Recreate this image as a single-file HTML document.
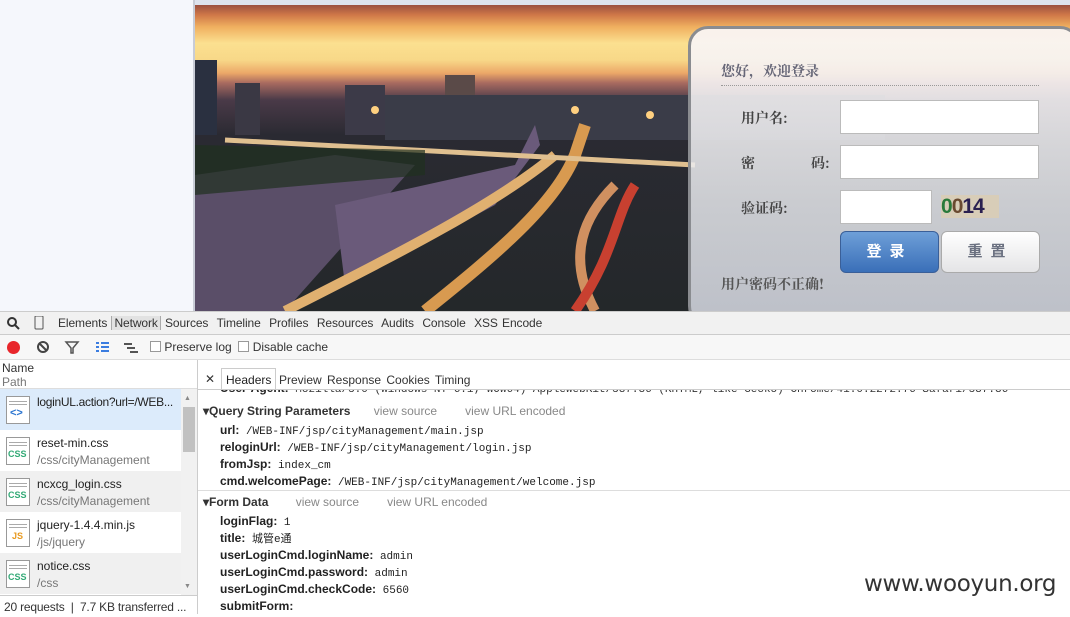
<!DOCTYPE html>
<html><head><meta charset="utf-8"><style>
*{margin:0;padding:0;box-sizing:border-box}
body{width:1070px;height:614px;overflow:hidden;position:relative;background:#fff;font-family:"Liberation Sans","Noto Sans CJK SC",sans-serif;font-size:12px;color:#222}
.a{position:absolute}
.mono{font-family:"Liberation Mono","Noto Sans CJK SC",monospace;font-size:11px}
.mono div{height:17px;line-height:17px;white-space:nowrap}
.row{position:absolute;left:0;width:181px;height:41px}
.ic{position:absolute;left:6px;top:7px;width:24px;height:28px;border:1px solid #999;background:#fff}
.ic b{position:absolute;left:2px;right:2px;height:1px;background:#aaa}
.ic i{position:absolute;left:1px;bottom:5px;font-style:normal;font-size:9px;font-weight:bold;color:#3a7;background:#fff;line-height:10px}
.t1{position:absolute;left:37px;top:6px;font-size:12px;color:#222}
.t2{position:absolute;left:37px;top:23px;font-size:12px;color:#777}
.k{font-weight:bold;color:#222;font-family:"Liberation Sans",sans-serif;font-size:12px}
.lab{position:absolute;font-weight:bold;font-size:14px;color:#444;font-family:"Noto Serif CJK SC",serif}
.inp{position:absolute;background:#fff;border:1px solid #bbb}
</style></head><body>
<div class="a" style="left:0;top:0;width:193px;height:311px;background:#f5f7fc"></div>
<div class="a" style="left:193px;top:0;width:2px;height:311px;background:#c8ccd6"></div>
<div class="a" style="left:195px;top:0;width:875px;height:5px;background:#dde3ee"></div>
<!-- photo -->
<div class="a" style="left:195px;top:5px;width:875px;height:306px;overflow:hidden;background:linear-gradient(180deg,#9a5040 0px,#d07848 10px,#f0b060 22px,#fbe090 38px,#f8d888 55px,#eca868 68px,#a86a60 78px,#4a3a48 95px,#2a2a32 130px,#24282a 306px)">
<svg width="875" height="306" style="position:absolute;left:0;top:0">
<rect x="0" y="55" width="22" height="75" fill="#2a3040"/>
<rect x="40" y="78" width="25" height="52" fill="#3a3844"/>
<rect x="150" y="80" width="40" height="50" fill="#3c3a48"/>
<rect x="250" y="70" width="30" height="60" fill="#5a4a48"/>
<rect x="190" y="90" width="500" height="45" fill="#3a3c48"/>
<circle cx="180" cy="105" r="4" fill="#ffd080"/><circle cx="380" cy="105" r="4" fill="#ffd080"/><circle cx="455" cy="110" r="4" fill="#ffd080"/>
<path d="M0 170 L140 150 L220 160 L90 306 L0 306Z" fill="#5a4e68"/>
<path d="M140 200 L320 160 L340 120 L345 140 L300 200 L150 280Z" fill="#6a5a7a"/>
<path d="M90 306 C200 250 300 200 360 150" stroke="#e0b070" stroke-width="10" fill="none"/>
<path d="M230 306 C300 250 360 200 380 150 L390 120" stroke="#d89a50" stroke-width="12" fill="none"/>
<path d="M30 135 L500 160" stroke="#e0c090" stroke-width="5" fill="none"/>
<path d="M400 306 C370 250 390 210 420 180" stroke="#d09060" stroke-width="10" fill="none"/>
<path d="M380 306 C420 250 420 210 440 180" stroke="#c84030" stroke-width="10" fill="none"/>
<path d="M0 140 L230 145 L230 170 L0 190Z" fill="#203020" opacity=".7"/>
</svg>
</div>
<!-- login panel -->
<div class="a" style="left:688px;top:26px;width:392px;height:300px;border:3px solid #8a8c90;border-radius:20px;background:linear-gradient(180deg,rgba(250,246,246,.93),rgba(230,232,236,.85) 60%,rgba(215,218,228,.85))"></div>
<div class="a" style="left:721px;top:61px;font-size:14px;font-weight:bold;color:#667;font-family:'Noto Serif CJK SC',serif">您好，欢迎登录</div>
<div class="a" style="left:721px;top:85px;width:318px;border-top:1px dotted #999"></div>
<div class="lab" style="left:741px;top:108px">用户名:</div>
<div class="lab" style="left:741px;top:153px">密</div>
<div class="lab" style="left:811px;top:153px">码:</div>
<div class="lab" style="left:741px;top:198px">验证码:</div>
<div class="inp" style="left:840px;top:100px;width:199px;height:34px"></div>
<div class="inp" style="left:840px;top:145px;width:199px;height:34px"></div>
<div class="inp" style="left:840px;top:190px;width:92px;height:34px"></div>
<div class="a" style="left:941px;top:195px;width:58px;height:23px;background:#d8cdb8;font:bold 21px 'Liberation Sans';letter-spacing:-1px;color:#2a2050"><span style="color:#2a7a3a">0</span><span style="color:#6a4a30">0</span>14</div>
<div class="a" style="left:840px;top:231px;width:99px;height:42px;border-radius:6px;background:linear-gradient(180deg,#6e9fd8,#3a6fb8);border:1px solid #3a5f98;color:#fff;font-size:15px;font-weight:bold;text-align:center;line-height:40px;letter-spacing:8px">登录</div>
<div class="a" style="left:941px;top:231px;width:99px;height:42px;border-radius:6px;background:linear-gradient(180deg,#fff,#e4e4e6);border:1px solid #aaa;color:#6a7080;font-size:15px;font-weight:bold;text-align:center;line-height:40px;letter-spacing:8px">重置</div>
<div class="a" style="left:721px;top:274px;font-size:14px;font-weight:bold;color:#555;font-family:'Noto Serif CJK SC',serif">用户密码不正确!</div>
<!-- devtools -->
<div class="a" style="left:0;top:311px;width:1070px;height:24px;background:#f1f1f1;border-top:1px solid #ccc;border-bottom:1px solid #ccc"></div>
<svg class="a" style="left:6px;top:316px" width="40" height="14"><circle cx="6" cy="6" r="4" stroke="#333" stroke-width="2" fill="none"/><path d="M9 9 L13 13" stroke="#333" stroke-width="2"/><rect x="29" y="0" width="8" height="13" rx="1" stroke="#555" fill="none"/></svg>
<div class="a" style="left:58px;top:316px;font-size:12px;color:#333;word-spacing:1px;letter-spacing:-0.1px">Elements <span style="border-left:1px solid #aaa;border-right:1px solid #aaa;padding:0 2px;background:#e2e2e2">Network</span> Sources&nbsp; Timeline&nbsp; Profiles&nbsp; Resources&nbsp; Audits&nbsp; Console&nbsp; XSS Encode</div>
<div class="a" style="left:0;top:335px;width:1070px;height:25px;background:#f7f7f7;border-bottom:1px solid #ddd"></div>
<div class="a" style="left:7px;top:341px;width:13px;height:13px;border-radius:50%;background:#e8262b"></div>
<svg class="a" style="left:36px;top:340px" width="120" height="16"><circle cx="7" cy="7" r="5" stroke="#444" stroke-width="2" fill="none"/><path d="M3 3 L11 11" stroke="#444" stroke-width="2"/><path d="M30 2 L42 2 L37 8 L37 13 L35 13 L35 8Z" stroke="#555" stroke-width="1.5" fill="none"/><g fill="#3b7de0"><rect x="60" y="2" width="3" height="2"/><rect x="65" y="2" width="8" height="2"/><rect x="60" y="6" width="3" height="2"/><rect x="65" y="6" width="8" height="2"/><rect x="60" y="10" width="3" height="2"/><rect x="65" y="10" width="8" height="2"/></g><g fill="#555"><rect x="88" y="3" width="8" height="2"/><rect x="91" y="7" width="8" height="2"/><rect x="94" y="11" width="8" height="2"/></g></svg>
<div class="a" style="left:150px;top:340px;font-size:12px;color:#333"><span style="display:inline-block;width:11px;height:11px;border:1px solid #999;background:#fff;vertical-align:-1px"></span> Preserve log &nbsp;<span style="display:inline-block;width:11px;height:11px;border:1px solid #999;background:#fff;vertical-align:-1px"></span> Disable cache</div>
<div class="a" style="left:2px;top:361px;font-size:12px;color:#333;line-height:14px">Name<br><span style="color:#777">Path</span></div>
<div class="a" style="left:197px;top:360px;width:1px;height:254px;background:#ccc"></div>
<div class="a" style="left:0;top:388px;width:197px;height:1px;background:#ddd"></div>
<div class="a" style="left:205px;top:372px;font-size:12px;color:#333">✕</div>
<div class="a" style="left:221px;top:368px;height:22px;border:1px solid #ccc;border-bottom:none;background:#fff;padding:4px 4px 0;font-size:12px">Headers</div>
<div class="a" style="left:279px;top:373px;font-size:12px;color:#333;word-spacing:2px">Preview Response Cookies Timing</div>
<!-- list -->
<div class="row" style="top:389px;background:#dcebfb"><div class="ic"><b style="top:4px"></b><b style="top:7px"></b><span style="position:absolute;left:3px;top:10px;color:#2a74d0;font-weight:bold;font-size:11px">&lt;&gt;</span></div><div class="t1" style="letter-spacing:-0.3px">loginUL.action?url=/WEB...</div></div>
<div class="row" style="top:430px;background:#fff"><div class="ic"><b style="top:4px"></b><b style="top:7px"></b><i>CSS</i></div><div class="t1">reset-min.css</div><div class="t2">/css/cityManagement</div></div>
<div class="row" style="top:471px;background:#f0f0f0"><div class="ic"><b style="top:4px"></b><b style="top:7px"></b><i>CSS</i></div><div class="t1">ncxcg_login.css</div><div class="t2">/css/cityManagement</div></div>
<div class="row" style="top:512px;background:#fff"><div class="ic"><b style="top:4px"></b><b style="top:7px"></b><i style="color:#e89a20;left:5px">JS</i></div><div class="t1">jquery-1.4.4.min.js</div><div class="t2">/js/jquery</div></div>
<div class="row" style="top:553px;background:#f0f0f0"><div class="ic"><b style="top:4px"></b><b style="top:7px"></b><i>CSS</i></div><div class="t1">notice.css</div><div class="t2">/css</div></div>
<div class="a" style="left:181px;top:389px;width:16px;height:206px;background:#f1f1f1"></div>
<div class="a" style="left:183px;top:407px;width:12px;height:45px;background:#c1c1c1"></div>
<div class="a" style="left:184px;top:395px;font-size:7px;color:#888">▲</div>
<div class="a" style="left:184px;top:583px;font-size:7px;color:#888">▼</div>
<div class="a" style="left:0;top:595px;width:197px;height:19px;border-top:1px solid #ccc;background:#fff;font-size:12px;color:#333;padding:4px 0 0 4px;white-space:nowrap;letter-spacing:-0.2px">20 requests &nbsp;|&nbsp; 7.7 KB transferred ...</div>
<!-- headers -->
<div class="a" style="left:198px;top:390px;width:872px;height:8px;overflow:hidden">
<div class="mono" style="position:absolute;left:22px;top:-9px;white-space:nowrap;color:#333"><span class="k">User-Agent:</span> Mozilla/5.0 (Windows NT 6.1; WOW64) AppleWebKit/537.36 (KHTML, like Gecko) Chrome/41.0.2272.76 Safari/537.36</div></div>
<div class="a" style="left:198px;top:389px;width:872px;height:1px;background:#ccc"></div>
<div class="a" style="left:203px;top:404px;font-size:12px;font-weight:bold;color:#333">▾Query String Parameters <span style="font-weight:normal;color:#888;margin-left:20px">view source</span><span style="font-weight:normal;color:#888;margin-left:28px">view URL encoded</span></div>
<div class="a mono" style="left:220px;top:422px;color:#222">
<div><span class="k">url:</span> /WEB-INF/jsp/cityManagement/main.jsp</div>
<div><span class="k">reloginUrl:</span> /WEB-INF/jsp/cityManagement/login.jsp</div>
<div><span class="k">fromJsp:</span> index_cm</div>
<div><span class="k">cmd.welcomePage:</span> /WEB-INF/jsp/cityManagement/welcome.jsp</div></div>
<div class="a" style="left:198px;top:490px;width:872px;height:1px;background:#ddd"></div>
<div class="a" style="left:203px;top:495px;font-size:12px;font-weight:bold;color:#333">▾Form Data <span style="font-weight:normal;color:#888;margin-left:24px">view source</span><span style="font-weight:normal;color:#888;margin-left:28px">view URL encoded</span></div>
<div class="a mono" style="left:220px;top:513px;color:#222">
<div><span class="k">loginFlag:</span> 1</div>
<div><span class="k">title:</span> 城管e通</div>
<div><span class="k">userLoginCmd.loginName:</span> admin</div>
<div><span class="k">userLoginCmd.password:</span> admin</div>
<div><span class="k">userLoginCmd.checkCode:</span> 6560</div>
<div><span class="k">submitForm:</span></div></div>
<div class="a" style="left:864px;top:571px;font-size:23px;color:#333;font-family:'DejaVu Sans','Liberation Sans',sans-serif;letter-spacing:-0.3px">www.wooyun.org</div>
</body></html>
